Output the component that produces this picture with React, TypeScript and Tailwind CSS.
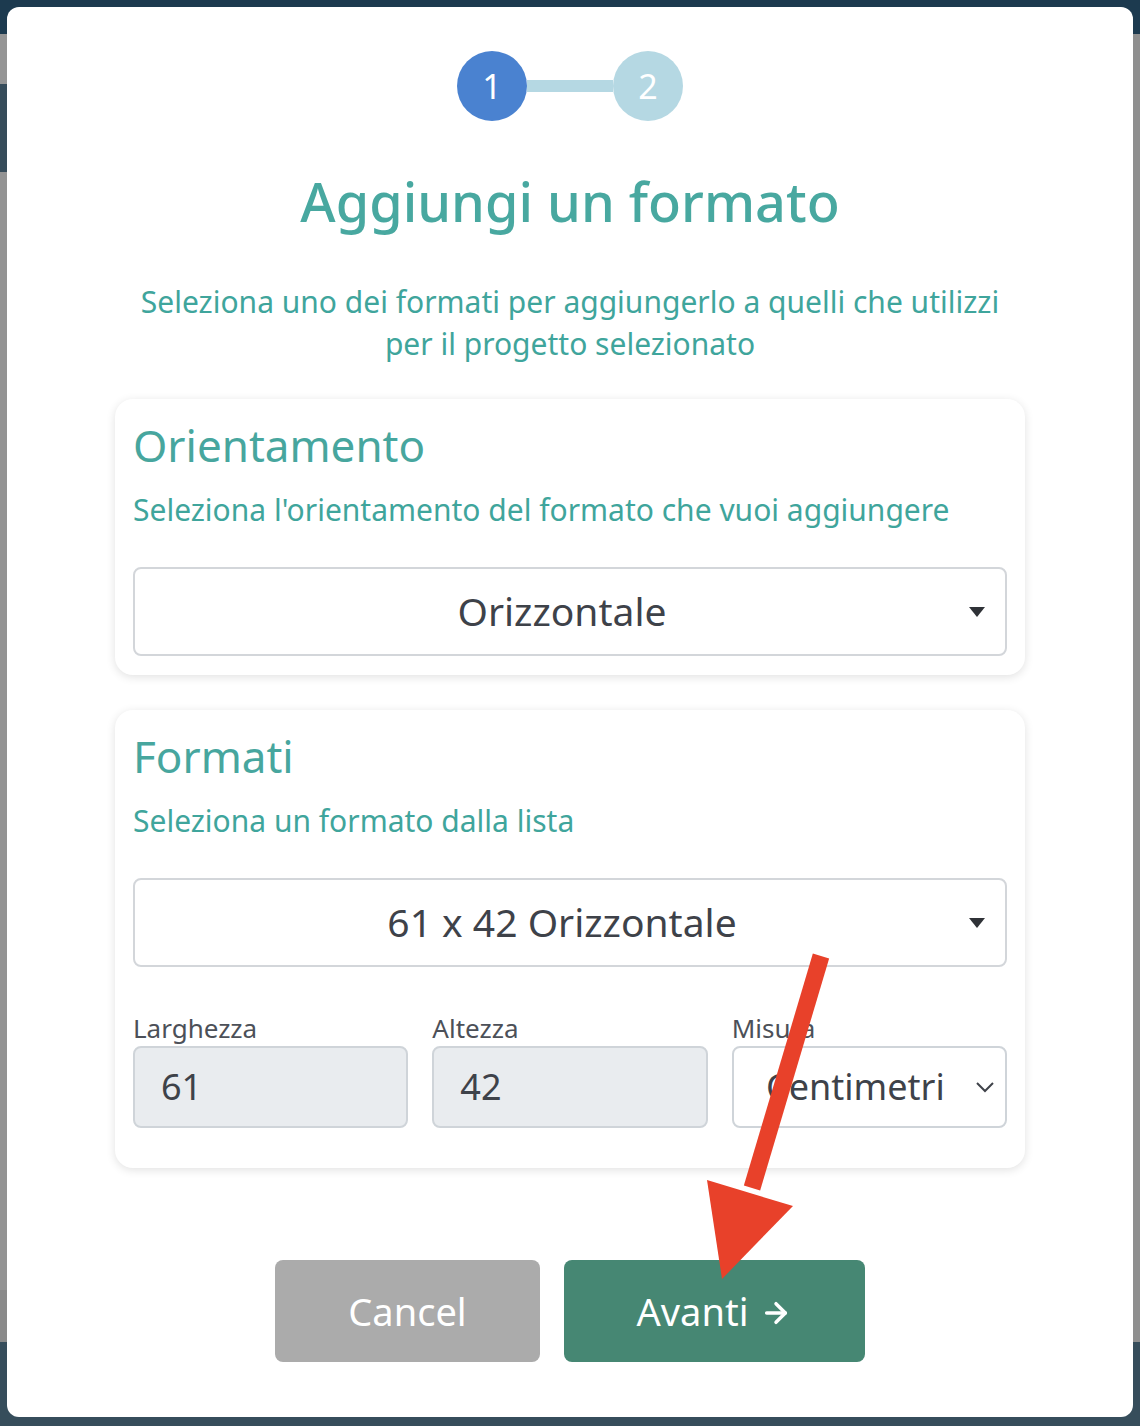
import React from "react";
import { ArrowRight } from "lucide-react";

const font = { fontFamily: '"Noto Sans", "Open Sans", sans-serif' };

function Caret() {
  return (
    <svg width="16" height="12" viewBox="0 0 16 12" className="absolute right-[20px] top-1/2 -translate-y-1/2">
      <path d="M0 1h16L8 11z" fill="#2f3237" />
    </svg>
  );
}

function Chevron() {
  return (
    <svg width="20" height="12" viewBox="0 0 20 12" className="absolute right-[10px] top-1/2 -translate-y-1/2">
      <path d="M2 2l8 8 8-8" fill="none" stroke="#3f434a" strokeWidth="2" />
    </svg>
  );
}

function Select({ value }: { value: string }) {
  return (
    <div className="relative flex h-[89px] items-center justify-center rounded-[8px] border-2 border-[#d3d6da] bg-white pr-[16px] text-[39px] text-[#3e4249]">
      {value}
      <Caret />
    </div>
  );
}

function Field({ label, value }: { label: string; value: string }) {
  return (
    <div className="flex flex-col">
      <span className="text-[26px] leading-[35px] text-[#4c5058]">{label}</span>
      <div className="flex h-[82px] items-center rounded-[8px] border-2 border-[#cfd4d9] bg-[#e9ecef] px-[26px] text-[36px] text-[#3e4249]">
        {value}
      </div>
    </div>
  );
}

export default function App() {
  return (
    <div className="relative h-[1426px] w-[1140px] overflow-hidden bg-[#939393]" style={font}>
      {/* dimmed page behind */}
      <div className="flex h-full">
        <div className="flex w-[7px] flex-col">
          <div className="h-[34px] bg-[#1c3a4f]" />
          <div className="h-[50px] bg-[#959595]" />
          <div className="h-[88px] bg-[#364c5a]" />
          <div className="flex-1 bg-[#939393]" />
          <div className="h-[52px] bg-[#8a8a8a]" />
          <div className="h-[84px] bg-[#364d5b]" />
        </div>
        <div className="flex flex-1 flex-col">
          <div className="h-[34px] bg-[#1c3a4f]" />
          <div className="flex-1 bg-[#939393]" />
          <div className="h-[84px] bg-[#364d5b]" />
        </div>
        <div className="flex w-[7px] flex-col">
          <div className="h-[34px] bg-[#1c3a4f]" />
          <div className="flex-1 bg-[#8f8f8f]" />
          <div className="h-[84px] bg-[#364d5b]" />
        </div>
      </div>

      {/* modal */}
      <div className="absolute left-[7px] top-[7px] flex h-[1410px] w-[1126px] flex-col items-center rounded-[12px] bg-white px-[108px] pt-[44px]">
        <div className="flex items-center">
          <div className="flex h-[70px] w-[70px] items-center justify-center rounded-full bg-[#4a82d0] text-[34px] text-white">1</div>
          <div className="h-[12px] w-[86px] bg-[#b5d8e3]" />
          <div className="flex h-[70px] w-[70px] items-center justify-center rounded-full bg-[#b5d8e3] text-[34px] text-white">2</div>
        </div>

        <h1 className="mt-[44px] text-[54px] font-medium leading-[72px] text-[#48a8a0]">Aggiungi un formato</h1>

        <p className="mt-[44px] text-center text-[30px] leading-[42px] text-[#3fa59c]">
          Seleziona uno dei formati per aggiungerlo a quelli che utilizzi
          <br />
          per il progetto selezionato
        </p>

        <div className="mt-[34px] flex w-full flex-col rounded-[18px] bg-white px-[18px] pb-[19px] pt-[18px] shadow-[0_2px_10px_rgba(0,0,0,0.12)]">
          <h2 className="text-[44px] leading-[56px] text-[#47a69e]">Orientamento</h2>
          <p className="mt-[17px] text-[30px] leading-[40px] text-[#3fa59c]">
            Seleziona l'orientamento del formato che vuoi aggiungere
          </p>
          <div className="mt-[37px]">
            <Select value="Orizzontale" />
          </div>
        </div>

        <div className="mt-[35px] flex w-full flex-col rounded-[18px] bg-white px-[18px] pb-[40px] pt-[18px] shadow-[0_2px_10px_rgba(0,0,0,0.12)]">
          <h2 className="text-[44px] leading-[56px] text-[#47a69e]">Formati</h2>
          <p className="mt-[17px] text-[30px] leading-[40px] text-[#3fa59c]">Seleziona un formato dalla lista</p>
          <div className="mt-[37px]">
            <Select value="61 x 42 Orizzontale" />
          </div>
          <div className="mt-[44px] grid grid-cols-3 gap-[24px]">
            <Field label="Larghezza" value="61" />
            <Field label="Altezza" value="42" />
            <div className="flex flex-col">
              <span className="text-[26px] leading-[35px] text-[#4c5058]">Misura</span>
              <div className="relative flex h-[82px] items-center justify-center rounded-[8px] border-2 border-[#cfd4d9] bg-white pr-[28px] text-[36px] text-[#3e4249]">
                Centimetri
                <Chevron />
              </div>
            </div>
          </div>
        </div>

        <div className="mt-[92px] flex gap-[24px]">
          <button className="h-[102px] w-[265px] rounded-[8px] bg-[#ababab] text-[38px] text-white">Cancel</button>
          <button className="flex h-[102px] w-[301px] items-center justify-center gap-[12px] rounded-[8px] bg-[#468773] text-[38px] text-white">
            Avanti
            <ArrowRight size={32} strokeWidth={2.6} className="mt-[4px]" />
          </button>
        </div>
      </div>

      {/* annotation arrow */}
      <svg className="pointer-events-none absolute left-0 top-0" width="1140" height="1426" viewBox="0 0 1140 1426">
        <line x1="821" y1="956" x2="752" y2="1188" stroke="#e8412a" strokeWidth="17" />
        <polygon points="707,1180 793,1206 722,1279" fill="#e8412a" />
      </svg>
    </div>
  );
}
